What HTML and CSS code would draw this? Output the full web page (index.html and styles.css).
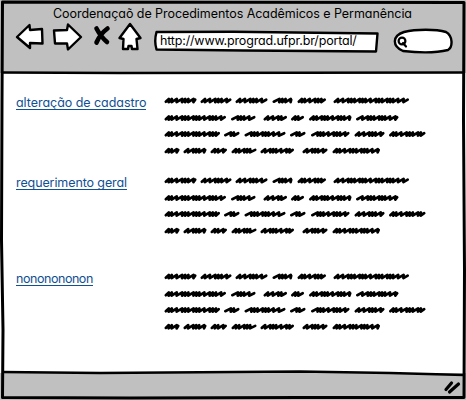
FILE: index.html
```html
<!DOCTYPE html>
<html lang="pt">
<head>
<meta charset="utf-8">
<title>Coordenaçaõ de Procedimentos Acadêmicos e Permanência</title>
<link rel="stylesheet" href="styles.css">
</head>
<body>
<div class="window">
  <svg class="frame" viewBox="0 0 466 400" aria-hidden="true">
    <path class="edge" d="M2.500 2L464 2.500L463.500 120L464.500 270L464 397.500L300 397.500L130 398L2.500 397.500L3 330L1.500 240L2 100Z"/>
    <path class="edge thin" d="M2 72.500L120 73L300 72.800L464 72.500M2 372L100 373L300 371.500L390 373L464 375"/>
  </svg>
  <header class="chrome">
    <h1 class="title">Coordenaçaõ de Procedimentos Acadêmicos e Permanência</h1>
    <div class="toolbar">
      <svg class="nav" viewBox="0 22 148 32">
        <path class="shape" d="M17 37L29.500 25L30 30L42 29L42.500 43.500L30 43L30 48Z"/>
        <path class="shape" d="M54 30.500L67 30L68 24.500L81 37L68 49.500L67 43.500L55 43.500Z"/>
        <path class="cross" d="M96.500 28.500Q101 37 107 42M107.500 28.500Q100 34 96.500 42.500"/>
        <path class="shape" d="M130 24L140.500 38L136.500 39L137.500 49L132 49L131.500 46L128.500 46L128 49L123 49L123.500 39L119.500 38Z"/>
      </svg>
      <div class="address">
        <svg class="outline" viewBox="0 0 226 24"><path class="shape" d="M3.500 2L80 1.800L224.500 3.500L223 21.500L90 20.500L3.500 19.500Q1 11 3.500 2Z"/></svg>
        <span class="url">http://www.prograd.ufpr.br/portal/</span>
      </div>
      <svg class="search" viewBox="0 0 62 26">
        <path class="shape" d="M12 4C24 1 44 1 54 4C61 8 61 19 56 22C42 25.500 24 24.500 11 23C0 18 0 8 12 4Z"/>
        <ellipse class="lens" cx="10" cy="13" rx="3.400" ry="3.400"/><path class="lens" d="M11 15L14 18.500"/>
      </svg>
    </div>
  </header>
  <main class="content">
    <section class="row"><a class="link" href="#">alteração de cadastro</a><svg class="scribble" viewBox="160 92 270 66"></svg></section>
    <section class="row"><a class="link tight" href="#">requerimento geral</a><svg class="scribble" viewBox="160 92 270 66"></svg></section>
    <section class="row last"><a class="link tighter" href="#">nononononon</a><svg class="scribble" viewBox="160 92 270 66"></svg></section>
  </main>
  <footer class="status">
    <svg class="grip" viewBox="443 379 20 16"><path d="M446 389.500L451.500 383M449.500 392L458.500 384"/></svg>
  </footer>
</div>
<script src="scribble.js"></script>
</body>
</html>
```
FILE: styles.css
```css
body { margin: 0; background: #fff; font-family: Inter, "Open Sans", sans-serif; font-feature-settings: "cv11"; }
.window { position: relative; width: 466px; height: 400px; display: flex; flex-direction: column; overflow: hidden; }
.frame { position: absolute; inset: 0; width: 466px; height: 400px; z-index: 1; pointer-events: none; }
.edge { fill: none; stroke: #000; stroke-width: 3; stroke-linejoin: round; }
.thin { stroke-width: 2.5; }
.chrome { height: 73px; background: #c0c0c0; }
.title { margin: 0; padding: 5px 0 0 53px; height: 17px; font-size: 12.5px; line-height: 17px; font-weight: 400; letter-spacing: -0.05px; white-space: nowrap; }
.toolbar { display: flex; }
.nav { width: 148px; height: 32px; flex: none; }
.shape { fill: #fff; stroke: #000; stroke-width: 2.4; stroke-linejoin: round; }
.cross { fill: none; stroke: #000; stroke-width: 4.6; stroke-linecap: round; }
.address { position: relative; width: 226px; height: 24px; margin: 8px 0 0 5px; flex: none; }
.outline { position: absolute; width: 226px; height: 24px; overflow: visible; }
.url { position: relative; display: block; padding-left: 7px; font-size: 12.5px; line-height: 21px; letter-spacing: -0.17px; white-space: nowrap; }
.search { width: 62px; height: 26px; margin: 6px 0 0 13px; flex: none; }
.lens { fill: none; stroke: #000; stroke-width: 2.2; stroke-linecap: round; }
.content { height: 281px; padding: 19px 0 0 16px; box-sizing: border-box; flex: 1; }
.row { height: 80px; display: grid; grid-template-columns: 144px 270px; align-items: start; }
.last { margin-top: 16px; }
.link { justify-self: start; margin-top: 2px; height: 15px; font-size: 12.5px; line-height: 17px; letter-spacing: -0.04px; color: #115092; text-decoration: none; border-bottom: 1px solid #115092; white-space: nowrap; }
.tight { letter-spacing: -0.1px; }
.tighter { letter-spacing: -0.45px; }
.scribble { width: 270px; height: 66px; fill: none; stroke: #000; stroke-width: 2.7; stroke-linejoin: round; stroke-linecap: round; }
.status { height: 27px; background: #c0c0c0; display: flex; justify-content: flex-end; }
.grip { width: 20px; height: 16px; margin: 6px 3px 0 0; fill: none; stroke: #000; stroke-width: 3.2; stroke-linecap: round; }
```
FILE: scribble.js
```js
// Each entry: centre of a line, then [start, end] of its words.
const lines = [
  [100.5, [[164.5,196.5],[200.5,231.5],[235.5,267.5],[272.5,292.5],[297.5,326],[333.5,409]]],
  [118, [[164.5,226],[231,255.5],[263.5,287],[291,304],[309,351.5],[356,398.5]]],
  [134, [[164.5,220],[224,239.5],[244.5,285.5],[290,305.5],[311,349.5],[354.5,384.5],[389,425.5]]],
  [150.7, [[164.5,179.5],[183.5,206.5],[210.5,227],[231.5,256.5],[260.5,294],[302.5,327.5],[332.5,380]]]
];
let markup = "";
for (const [y, words] of lines) for (const [a, b] of words) {
  let x = a + 1.3, d = `M${x} ${y + 1.2}`, i = Math.round(a);
  while (x < b - 7) {
    const step = [5.6, 3.2, 3.4, 5.4, 3, 3.2, 5.2][i++ % 7];
    d += `L${x + step} ${y - 1.6}L${x + step - 0.2} ${y + 1.7}`;
    x += step - 0.2;
  }
  d += `L${b - 1.3} ${y - 0.8}`;
  markup += `<path d="${d}"/>`;
}
document.querySelectorAll(".scribble").forEach(s => s.innerHTML = markup);
```
